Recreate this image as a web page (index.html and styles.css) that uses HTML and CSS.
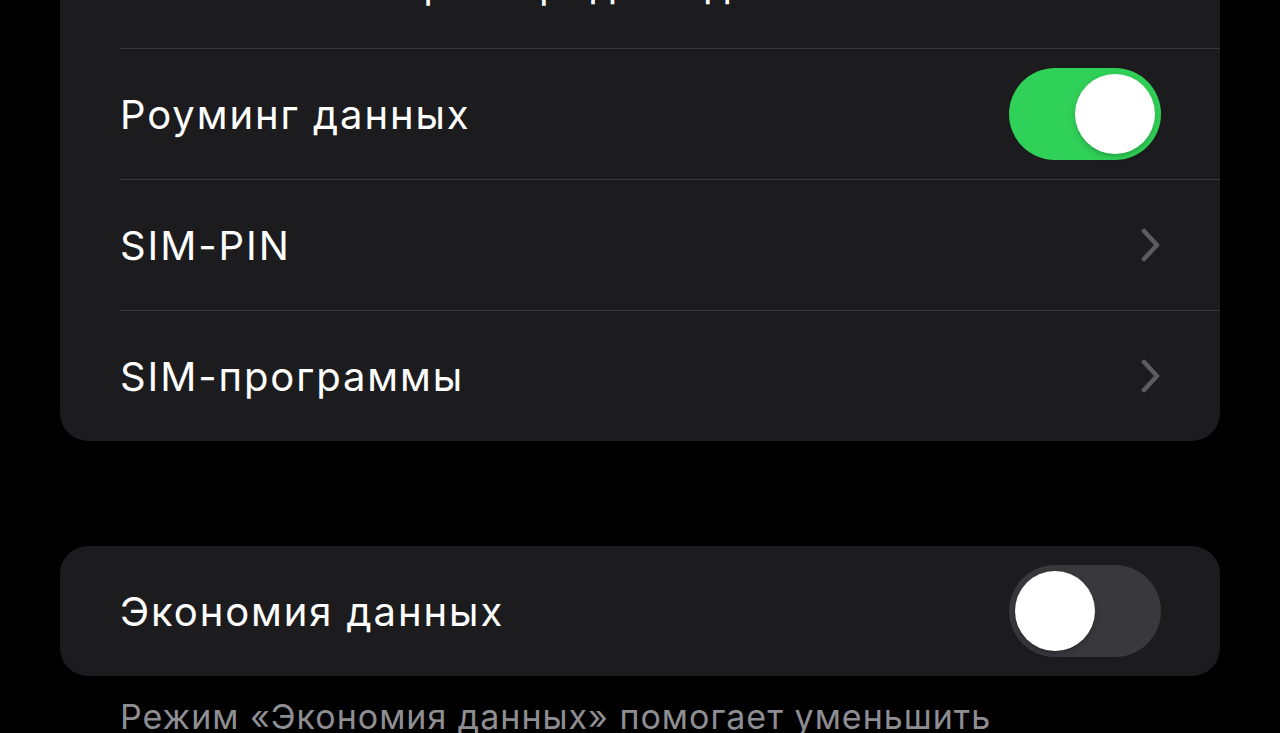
FILE: index.html
```html
<!DOCTYPE html>
<html lang="ru">
<head>
    <meta charset="UTF-8">
    <meta name="viewport" content="width=device-width, initial-scale=1.0">
    <title>Сотовые данные</title>
    <link rel="stylesheet" href="styles.css">
</head>
<body>

    <div class="settings">
        <div class="group group-top">
            <div class="row">
                <span class="row-label">Отключение при передаче данных</span>
            </div>
            <div class="row">
                <span class="row-label">Роуминг данных</span>
                <span class="switch on"><span class="knob"></span></span>
            </div>
            <div class="row">
                <span class="row-label">SIM-PIN</span>
                <svg class="chevron" width="20" height="34" viewBox="0 0 20 34">
                    <path d="M3 3 L16 17 L3 31" fill="none" stroke="currentColor" stroke-width="4.5" stroke-linecap="round" stroke-linejoin="round"/>
                </svg>
            </div>
            <div class="row">
                <span class="row-label">SIM-программы</span>
                <svg class="chevron" width="20" height="34" viewBox="0 0 20 34">
                    <path d="M3 3 L16 17 L3 31" fill="none" stroke="currentColor" stroke-width="4.5" stroke-linecap="round" stroke-linejoin="round"/>
                </svg>
            </div>
        </div>

        <div class="group">
            <div class="row">
                <span class="row-label">Экономия данных</span>
                <span class="switch"><span class="knob"></span></span>
            </div>
        </div>
        <p class="group-footer">Режим «Экономия данных» помогает уменьшить использование сотовых данных. Когда режим включен, автоматические обновления и фоновые задачи приостанавливаются.</p>
    </div>

</body>
</html>
```

FILE: styles.css
```css
:root {
    --bg: #000000;
    --cell: #1c1c1e;
    --separator: #38383a;
    --label: #ffffff;
    --secondary: #8e8e93;
    --green: #30d158;
    --track-off: #39393d;
    --chevron: #5b5b60;
}

html, body {
    height: 100%;
}

body {
    margin: 0;
    background: var(--bg);
    font-family: Inter, "Noto Sans", sans-serif;
    color: var(--label);
    overflow: hidden;
}

.settings {
    padding: 0 60px;
}

.group {
    background: var(--cell);
    border-radius: 28px;
    overflow: hidden;
}

/* list is scrolled, so the first row sits above the top edge */
.group-top {
    margin-top: -83px;
    border-top-left-radius: 0;
    border-top-right-radius: 0;
}

.group + .group {
    margin-top: 105px;
}

.row {
    display: flex;
    align-items: center;
    justify-content: space-between;
    height: 130px;
    margin-left: 60px;
    padding-right: 60px;
    border-top: 1px solid var(--separator);
}

.row:first-child {
    border-top: none;
}

.group-top .row:first-child {
    height: 131px;
}

.row-label {
    font-size: 40px;
    letter-spacing: 1.9px;
    line-height: 1;
    padding-top: 2px;
}

.switch {
    position: relative;
    width: 152px;
    height: 92px;
    border-radius: 46px;
    background: var(--track-off);
    flex-shrink: 0;
    margin-right: -1px;
}

.switch .knob {
    position: absolute;
    top: 6px;
    left: 6px;
    width: 80px;
    height: 80px;
    border-radius: 50%;
    background: #ffffff;
    box-shadow: 0 3px 8px rgba(0, 0, 0, 0.15), 0 3px 1px rgba(0, 0, 0, 0.06);
}

.switch.on {
    background: var(--green);
}

.switch.on .knob {
    left: 66px;
}

.chevron {
    color: var(--chevron);
    margin-right: -1px;
}

.group-footer {
    margin: 19px 0 0;
    padding: 0 60px;
    font-size: 34px;
    line-height: 1.3;
    color: var(--secondary);
    letter-spacing: 1px;
}
```
